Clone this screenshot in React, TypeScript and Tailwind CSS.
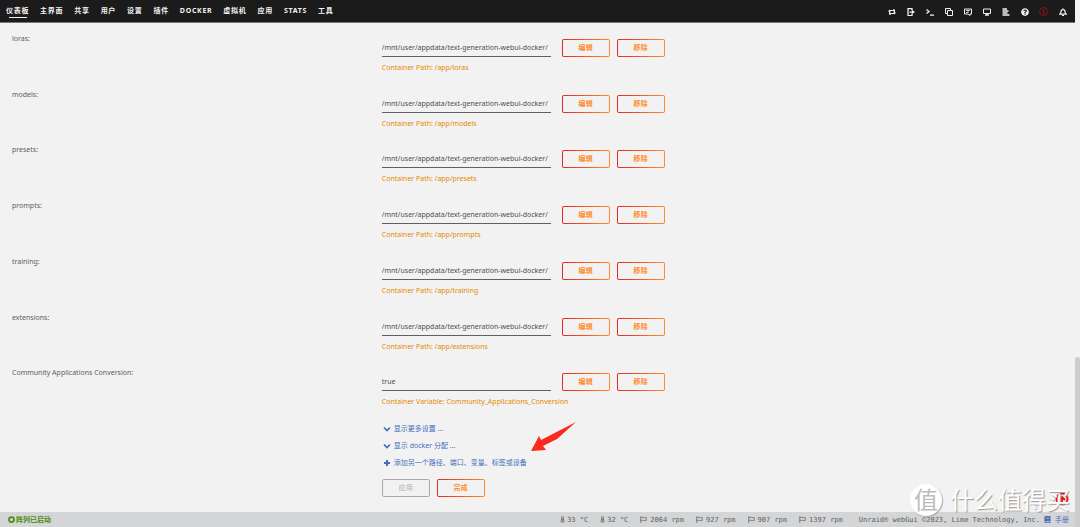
import type { ReactNode } from "react";
import { FaBook, FaQuestionCircle } from "react-icons/fa";

const menu = ["仪表板", "主界面", "共享", "用户", "设置", "插件", "Docker", "虚拟机", "应用", "Stats", "工具"];

const base = "/mnt/user/appdata/text-generation-webui-docker/";

const rows = [
  ...["loras", "models", "presets", "prompts", "training", "extensions"].map((name) => ({
    id: name,
    label: `${name}:`,
    value: base,
    note: `Container Path: /app/${name}`,
  })),
  {
    id: "conversion",
    label: "Community Applications Conversion:",
    value: "true",
    note: "Container Variable: Community_Applications_Conversion",
  },
];

function Stroke({ children }: { children: ReactNode }) {
  return (
    <svg viewBox="0 0 16 16" className="size-2" fill="none" stroke="currentColor" strokeWidth="2">
      {children}
    </svg>
  );
}

const tools: { name: string; icon: ReactNode }[] = [
  {
    name: "切换",
    icon: (
      <Stroke>
        <path d="M3 13V5h8M13 3v8H5" />
        <path d="M0 7l3-4 3 4zM10 9l3 4 3-4zM10 2l4 3-4 2zM6 9l-4 3 4 2z" fill="currentColor" stroke="none" />
      </Stroke>
    ),
  },
  {
    name: "注销",
    icon: (
      <Stroke>
        <path d="M10 5V1H2v14h8v-4M5 8h6" strokeWidth="2.500" />
        <path d="M10 4l6 4-6 4z" fill="currentColor" stroke="none" />
      </Stroke>
    ),
  },
  {
    name: "终端",
    icon: (
      <Stroke>
        <path d="M1 3l5 4-5 4M8 14h8" strokeWidth="2.500" />
      </Stroke>
    ),
  },
  {
    name: "文件",
    icon: (
      <Stroke>
        <path d="M5 11H1V1h10v4" />
        <path d="M5 5h10v10H5z" />
      </Stroke>
    ),
  },
  {
    name: "反馈",
    icon: (
      <Stroke>
        <path d="M1 2h14v10h-3v3l-4-3H1z" />
        <path d="M4 5h8M4 9h5M8 4v5" strokeWidth="1.500" />
      </Stroke>
    ),
  },
  {
    name: "信息",
    icon: (
      <Stroke>
        <path d="M1 2h14v9H1z" />
        <path d="M4 14h8M6 12h4" strokeWidth="2.500" />
      </Stroke>
    ),
  },
  {
    name: "日志",
    icon: (
      <Stroke>
        <path d="M1 2h9M1 6h12M1 10h10M1 14h14" strokeWidth="3" />
      </Stroke>
    ),
  },
  { name: "帮助", icon: <FaQuestionCircle className="size-2" /> },
  {
    name: "警告",
    icon: (
      <svg viewBox="0 0 16 16" className="size-[9px] text-[#a80f24]" fill="none" stroke="currentColor" strokeWidth="1.500">
        <circle cx="8" cy="8" r="7" />
        <path d="M8 4v8" strokeWidth="2" />
      </svg>
    ),
  },
  {
    name: "通知",
    icon: (
      <Stroke>
        <path d="M2 12c2-2 2-3 2-5a4 4 0 0 1 8 0c0 2 0 3 2 5zM8 1v2" strokeWidth="2.500" />
        <path d="M6 15h4" />
      </Stroke>
    ),
  },
];

function GradientButton({ children }: { children: ReactNode }) {
  return (
    <button
      type="button"
      className="flex h-[18px] w-12 items-center justify-center rounded-[2px] border border-transparent text-[7px] font-bold tracking-wider text-[#ff8c2f] [background:linear-gradient(#f2f2f2,#f2f2f2)_padding-box,linear-gradient(90deg,#e22828,#ff8c2f)_border-box]"
    >
      {children}
    </button>
  );
}

function Chevron() {
  return (
    <svg viewBox="0 0 16 16" className="size-2" fill="none" stroke="currentColor" strokeWidth="3.500">
      <path d="M2 5l6 6 6-6" />
    </svg>
  );
}

function Plus() {
  return (
    <svg viewBox="0 0 16 16" className="size-2" fill="none" stroke="currentColor" strokeWidth="4">
      <path d="M8 2v12M2 8h12" />
    </svg>
  );
}

function Thermometer() {
  return (
    <svg viewBox="0 0 10 14" className="h-[7px] w-[5px]" fill="none" stroke="currentColor" strokeWidth="1.500">
      <path d="M3 8V3a2 2 0 0 1 4 0v5a3 3 0 1 1-4 0z" />
      <path d="M5 5v6" />
    </svg>
  );
}

function Flag() {
  return (
    <svg viewBox="0 0 14 14" className="size-[7px]" fill="none" stroke="currentColor" strokeWidth="1.500">
      <path d="M1.500 1v13M1.500 3c4-2 6 1.500 11 0v6c-5 1.500-7-2-11 0" />
    </svg>
  );
}

export default function App() {
  return (
    <div className="relative flex min-h-screen bg-[#f2f2f2] font-['Noto_Sans','Noto_Sans_CJK_SC',sans-serif] text-[7px] leading-4 text-[#606060]">
      <div className="flex min-w-0 flex-1 flex-col">
        <header className="flex h-[23px] items-center justify-between border-b border-[#777] bg-[#1c1b1b] pr-[7px] pl-[6px] text-[#f2f2f2]">
          <nav className="flex gap-[11px] pt-0.5 font-bold tracking-widest uppercase">
            {menu.map((item, i) => (
              <a key={item} href="#" className="flex h-4 flex-col items-center leading-[13px] whitespace-nowrap">
                {item}
                {i === 0 && <span className="h-px w-[18px] shrink-0 bg-[#f2f2f2]" />}
              </a>
            ))}
          </nav>
          <div className="flex gap-2 pt-px">
            {tools.map((tool) => (
              <button key={tool.name} type="button" aria-label={tool.name} className="flex w-[11px] items-center justify-center">
                {tool.icon}
              </button>
            ))}
          </div>
        </header>

        <main className="flex-1 px-3">
          <div className="grid min-h-[390px] auto-rows-fr">
            {rows.map((row) => (
              <div key={row.id} className="grid grid-cols-[35%_1fr] gap-0.5 pt-2">
                <label htmlFor={row.id}>{row.label}</label>
                <div className="pt-2">
                  <div className="flex items-center gap-[7px]">
                    <input
                      id={row.id}
                      type="text"
                      defaultValue={row.value}
                      className="mr-1 h-[18px] w-[169px] border-b border-[#606060] bg-transparent text-[#505050] outline-none"
                    />
                    <GradientButton>编辑</GradientButton>
                    <GradientButton>移除</GradientButton>
                  </div>
                  <p className="pt-[3px] text-[#e68a00]">{row.note}</p>
                </div>
              </div>
            ))}
          </div>

          <div className="grid grid-cols-[35%_1fr] gap-0.5 pt-[7px]">
            <div className="col-start-2 text-[#486dba]">
              {[
                { text: "显示更多设置 ...", icon: <Chevron /> },
                { text: "显示 docker 分配 ...", icon: <Chevron /> },
                { text: "添加另一个路径、端口、变量、标签或设备", icon: <Plus /> },
              ].map((link) => (
                <a key={link.text} href="#" className="flex items-center gap-[3px] pl-px leading-[17px]">
                  {link.icon}
                  {link.text}
                </a>
              ))}
              <div className="flex gap-[7px] pt-2">
                <button
                  type="button"
                  disabled
                  className="flex h-[18px] w-12 items-center justify-center rounded-[2px] border border-[#a9a9a9] tracking-wider text-[#b0b0b0]"
                >
                  应用
                </button>
                <GradientButton>完成</GradientButton>
              </div>
            </div>
          </div>
        </main>

        <footer className="flex h-[15px] items-center justify-between bg-[#d4d5d6] pr-[6px] pl-2 font-['DejaVu_Sans_Mono','Noto_Sans_CJK_SC',monospace]">
          <span className="flex items-center gap-px font-['Noto_Sans','Noto_Sans_CJK_SC',sans-serif] font-bold text-[#4f8a10]">
            <svg viewBox="0 0 14 14" className="size-[7px]" fill="none" stroke="currentColor" strokeWidth="3.500">
              <circle cx="7" cy="7" r="5" />
            </svg>
            阵列已启动
          </span>
          <div className="flex items-center gap-4 whitespace-nowrap">
            <div className="flex items-center gap-3">
              {["33 °C", "32 °C"].map((t) => (
                <span key={t} className="flex items-center gap-[2px]">
                  <Thermometer />
                  {t}
                </span>
              ))}
              {["2064 rpm", "927 rpm", "907 rpm", "1397 rpm"].map((t) => (
                <span key={t} className="flex items-center gap-[3px]">
                  <Flag />
                  {t}
                </span>
              ))}
            </div>
            <span className="flex items-center gap-1">
              Unraid® webGui ©2023, Lime Technology, Inc.
              <a href="#" className="flex items-center gap-1 text-[#486dba]">
                <FaBook />
                手册
              </a>
            </span>
          </div>
        </footer>
      </div>

      <div className="flex w-[5px] flex-col justify-end">
        <div className="h-[170px] rounded-t-full bg-[#cdcdcd]" />
      </div>

      <svg viewBox="0 0 46 30" className="absolute top-[422px] left-[531px] h-[30px] w-[46px]">
        <path d="M45 0L10 18 8 14 0 29l15-1-3-4L26 17z" fill="#fb2a1c" />
      </svg>

      <svg viewBox="0 0 14 14" className="absolute right-[11px] bottom-[21px] size-[14px]" fill="none" stroke="#e01b1b" strokeWidth="2">
        <circle cx="7" cy="7" r="5.500" />
        <path d="M4 8l3-3 3 3M7 5v6" />
      </svg>

      <div className="absolute right-[10px] bottom-[11px] flex items-center gap-2 text-white">
        <span className="flex size-8 items-center justify-center rounded-full bg-white text-[24px] text-[#bdbdbd] shadow-[1px_1px_1px_#aaa]">
          值
        </span>
        <span className="text-[24px] leading-8 [text-shadow:1px_1px_1px_#999]">什么值得买</span>
      </div>
    </div>
  );
}
